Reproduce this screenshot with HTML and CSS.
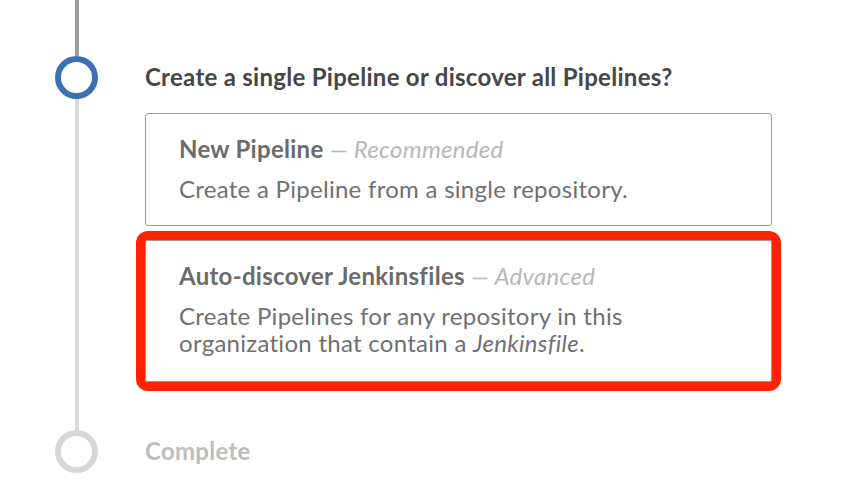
FILE: index.html
```html
<!DOCTYPE html>
<html lang="en">
<head>
<meta charset="utf-8">
<title>Create Pipeline</title>
<link rel="stylesheet" href="styles.css">
</head>
<body>
<div class="steps">
  <section class="step step--active">
    <div class="rail">
      <span class="line line--done line--top"></span>
      <span class="dot dot--active"></span>
      <span class="line line--fill"></span>
    </div>
    <div class="step-body">
      <h2 class="step-title">Create a single Pipeline or discover all Pipelines?</h2>
      <div class="options">
        <div class="option">
          <div class="option-title"><strong>New Pipeline</strong> <em class="option-tag">— Recommended</em></div>
          <p class="option-desc">Create a Pipeline from a single repository.</p>
        </div>
        <div class="option option--highlight">
          <div class="option-title"><strong>Auto-discover Jenkinsfiles</strong> <em class="option-tag">— Advanced</em></div>
          <p class="option-desc">Create Pipelines for any repository in this<br>organization that contain a <em>Jenkinsfile</em>.</p>
        </div>
      </div>
    </div>
  </section>
  <section class="step step--pending">
    <div class="rail">
      <span class="line line--lead"></span>
      <span class="dot dot--pending"></span>
    </div>
    <div class="step-body">
      <h2 class="step-title step-title--pending">Complete</h2>
    </div>
  </section>
</div>
</body>
</html>
```

FILE: styles.css
```css
* { box-sizing: border-box; }

html, body {
  margin: 0;
  padding: 0;
  background: #ffffff;
}

body {
  font-family: Lato, "Open Sans", "Liberation Sans", sans-serif;
  letter-spacing: 0.28px;
  width: 847px;
  height: 487px;
  overflow: hidden;
}

.steps {
  display: flex;
  flex-direction: column;
}

.step {
  display: flex;
  align-items: stretch;
}

.rail {
  width: 145px;
  flex: 0 0 145px;
  display: flex;
  flex-direction: column;
  align-items: center;
  padding-right: 47px;
  padding-left: 55px;
}

.line {
  display: block;
  width: 4px;
  background: #dadada;
}

.line--done { background: #9d9d9d; }
.line--top { height: 56px; }
.line--fill { flex: 1 1 auto; }
.line--lead { height: 40px; }

.dot {
  display: block;
  width: 43px;
  height: 43px;
  flex: 0 0 43px;
  border-radius: 50%;
  border: 6px solid #dadada;
  background: #ffffff;
}

.dot--active { border-color: #3c70b2; }
.dot--pending { border-color: #d7d7d7; }

.step-body {
  flex: 0 0 627px;
  width: 627px;
}

.step--active .step-body {
  padding-top: 62px;
  padding-bottom: 8px;
}

.step-title {
  margin: 0;
  font-size: 24px;
  line-height: 30px;
  font-weight: 700;
  color: #464646;
}

.step--pending .step-body {
  padding-top: 46px;
}

.step-title--pending {
  color: #bdbdbd;
}

.options {
  margin-top: 21px;
  display: flex;
  flex-direction: column;
  gap: 14px;
}

.option {
  border: 1px solid #9b9b9b;
  border-radius: 3px;
  padding: 20px 20px 23px 33px;
  background: #ffffff;
}

.option--highlight {
  outline: 9px solid #ff2200;
  outline-offset: 0;
  padding-bottom: 25px;
}

.option-title {
  font-size: 24px;
  line-height: 30px;
  color: #6b6b6b;
}

.option-title strong { font-weight: 700; }

.option-tag {
  font-style: italic;
  font-weight: 400;
  color: #b8b8b8;
}

.option-desc {
  margin: 11px 0 0;
  font-size: 24px;
  line-height: 27px;
  color: #707070;
}

.option-desc em { font-style: italic; }
```
